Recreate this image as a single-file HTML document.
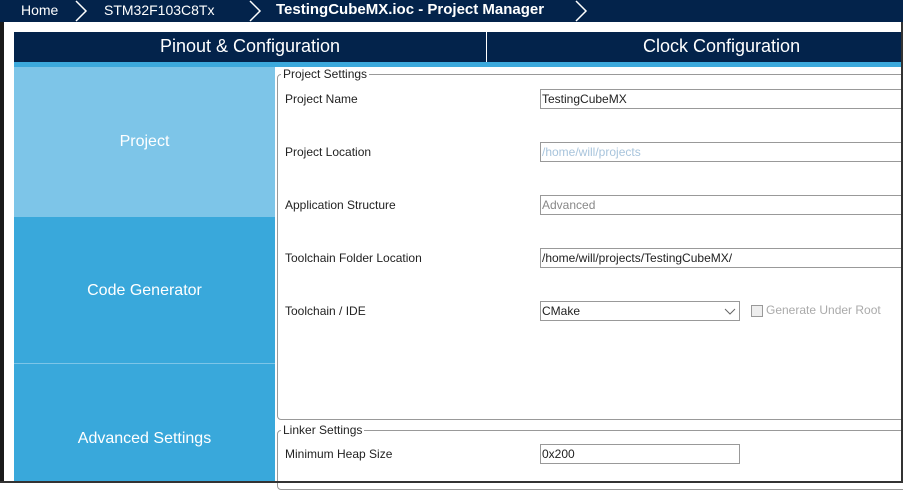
<!DOCTYPE html><html><head><style>
*{margin:0;padding:0;box-sizing:border-box}
body{width:903px;height:483px;overflow:hidden;background:#fff;font-family:"Liberation Sans",sans-serif;position:relative}
.a{position:absolute}
.lbl{position:absolute;left:285px;font-size:12px;color:#222}
.in{position:absolute;left:540px;height:20px;border:1px solid #999;background:#fff;font-size:12px;line-height:18px;padding-left:1px;color:#222;white-space:nowrap}
.top{z-index:5}
</style></head><body>
<div class="a" style="left:0;top:0;width:903px;height:22px;background:#03234b"></div>
<div class="a top" style="left:0;top:22px;width:4px;height:461px;background:#1a1a1a"></div>
<div class="a top" style="left:0;top:481px;width:903px;height:2px;background:#333"></div>
<div class="a top" style="left:901px;top:22px;width:2px;height:461px;background:#333"></div>
<div class="a" style="left:21px;top:2px;color:#fff;font-size:14px">Home</div>
<div class="a" style="left:104px;top:2px;color:#fff;font-size:14px">STM32F103C8Tx</div>
<div class="a" style="left:276px;top:1px;color:#fff;font-size:15px;font-weight:bold">TestingCubeMX.ioc - Project Manager</div>
<svg class="a" style="left:0;top:0" width="903" height="22"><g fill="none" stroke="#fff" stroke-width="1.5"><path d="M76 1 L86 11 L76 21"/><path d="M250 1 L260 11 L250 21"/><path d="M576 1 L586 11 L576 21"/></g></svg>
<div class="a" style="left:14px;top:32px;width:887px;height:30px;background:#03234b"></div>
<div class="a" style="left:486px;top:32px;width:1px;height:30px;background:#fff"></div>
<div class="a" style="left:14px;top:36px;width:472px;text-align:center;color:#fff;font-size:18px">Pinout &amp; Configuration</div>
<div class="a" style="left:643px;top:36px;color:#fff;font-size:18px;white-space:nowrap">Clock Configuration</div>
<div class="a" style="left:14px;top:62px;width:887px;height:5px;background:#3ca9dc"></div>
<div class="a" style="left:14px;top:67px;width:261px;height:150px;background:#7dc5e8;color:#fff;font-size:16px;text-align:center;line-height:150px">Project</div>
<div class="a" style="left:14px;top:217px;width:261px;height:146px;background:#39a8db;color:#fff;font-size:16px;text-align:center;line-height:148px">Code Generator</div>
<div class="a" style="left:14px;top:363px;width:261px;height:1px;background:#7dc5e8"></div>
<div class="a" style="left:14px;top:364px;width:261px;height:117px;background:#39a8db;color:#fff;font-size:16px;text-align:center;padding-top:66px">Advanced Settings</div>
<div class="a" style="left:277px;top:74px;width:630px;height:346px;border:1px solid #999;border-radius:4px"></div>
<div class="a" style="left:281px;top:67px;background:#fff;padding:0 2px;font-size:12px;color:#222">Project Settings</div>
<div class="a" style="left:277px;top:430px;width:630px;height:60px;border:1px solid #999;border-radius:4px"></div>
<div class="a" style="left:281px;top:423px;background:#fff;padding:0 2px;font-size:12px;color:#222">Linker Settings</div>
<div class="lbl" style="top:92px">Project Name</div>
<div class="in" style="top:89px;width:370px">TestingCubeMX</div>
<div class="lbl" style="top:145px">Project Location</div>
<div class="in" style="top:142px;width:370px;color:#a8c4dc">/home/will/projects</div>
<div class="lbl" style="top:198px">Application Structure</div>
<div class="in" style="top:195px;width:370px;color:#888">Advanced</div>
<div class="lbl" style="top:251px">Toolchain Folder Location</div>
<div class="in" style="top:248px;width:370px">/home/will/projects/TestingCubeMX/</div>
<div class="lbl" style="top:304px">Toolchain / IDE</div>
<div class="in" style="top:301px;width:200px">CMake</div>
<svg class="a" style="left:724px;top:307px" width="12" height="8"><path d="M1 2 L6 7 L11 2" fill="none" stroke="#666" stroke-width="1"/></svg>
<div class="a" style="left:751px;top:305px;width:12px;height:12px;border:1px solid #999;background:#eee"></div>
<div class="a" style="left:766px;top:303px;font-size:12px;color:#aaa">Generate Under Root</div>
<div class="lbl" style="top:447px">Minimum Heap Size</div>
<div class="in" style="top:444px;width:200px">0x200</div>
</body></html>
